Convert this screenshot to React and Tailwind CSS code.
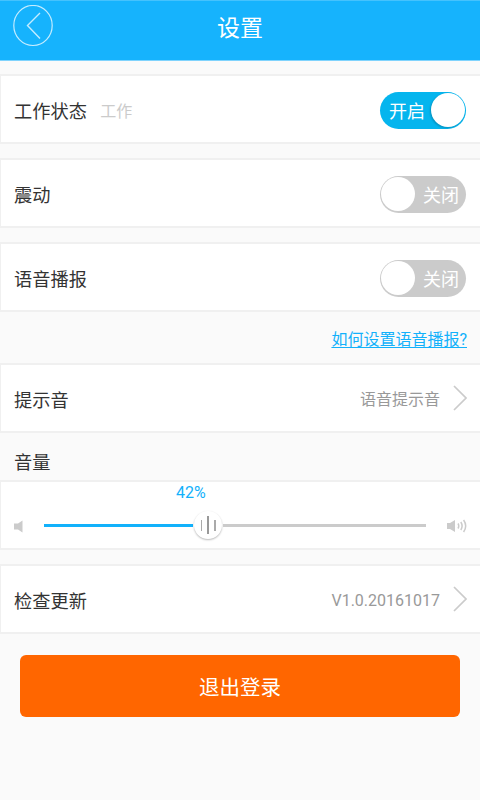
import React, { useState } from "react";

const Panel = ({ className = "", children }) => (
  <div
    className={`h-[70px] bg-white border-t-2 border-b-2 border-l border-[#f0f0f0] px-[13px] ${className}`}
  >
    {children}
  </div>
);

const Label = ({ children }) => (
  <span className="pt-[5px] tracking-[0.1px]">{children}</span>
);

const Switch = ({ on, onClick }) => (
  <button
    type="button"
    onClick={onClick}
    className={`flex items-center justify-between w-[86px] h-[37px] mt-[2px] mr-px rounded-full text-white text-[18px] leading-none p-[1px] ${
      on ? "bg-[#05b5ee] pl-[9px]" : "bg-[#cbcbcb] flex-row-reverse pr-[7px]"
    }`}
  >
    <span className="pt-[3px]">{on ? "开启" : "关闭"}</span>
    <span
      className={`size-[34px] rounded-full bg-white ${
        on ? "shadow-[-1px_1px_2px_rgba(0,0,0,0.2)]" : ""
      }`}
    />
  </button>
);

const Arrow = () => (
  <svg width="14" height="26" viewBox="0 0 14 26" fill="none" className="ml-[13px]">
    <path d="M1 1 L13 13 L1 25" stroke="#cbcbcb" strokeWidth="1.7" />
  </svg>
);

const Volume = ({ percent }) => (
  <Panel className="flex flex-col">
    <div className="h-[20px] pl-[162px] pt-px text-[16px] leading-[20px] text-[#12b1fb]">
      {percent}%
    </div>
    <div className="flex items-center h-[46px]">
      <svg
        width="9"
        height="13"
        viewBox="0 0 9 13"
        fill="#cbcbcb"
        className="shrink-0 mt-[2px]"
      >
        <path d="M0 3.5h4L8.5 0.5V12.5L4 9.5H0z" />
      </svg>
      <div className="flex items-center shrink-0 ml-[21px] w-[382px]">
        <div className="h-[3px] w-[149px] bg-[#12b1fb]" />
        <div className="flex items-center justify-center gap-[5px] mx-[1px] size-[28px] rounded-full bg-white shadow-[0_1px_2px_rgba(0,0,0,0.28)]">
          <span className="w-[1.5px] h-[11px] bg-[#aaaaaa]" />
          <span className="w-[2px] h-[18px] bg-[#999999]" />
          <span className="w-[1.5px] h-[11px] bg-[#aaaaaa]" />
        </div>
        <div className="h-[3px] flex-1 bg-[#cbcbcb]" />
      </div>
      <svg
        width="21"
        height="14"
        viewBox="0 0 21 14"
        fill="none"
        stroke="#cbcbcb"
        strokeWidth="1.5"
        className="shrink-0 ml-[21px] mt-[2px]"
      >
        <path d="M0 4h3L8 1V13L3 10H0z" fill="#cbcbcb" stroke="none" />
        <path d="M11 4.5Q12.5 7 11 9.5M13.8 3Q16.4 7 13.8 11M16.6 1Q20.8 7 16.6 13" />
      </svg>
    </div>
  </Panel>
);

const App = () => {
  const [working, setWorking] = useState(true);
  const [vibrate, setVibrate] = useState(false);
  const [voice, setVoice] = useState(false);

  return (
    <div className="w-[480px] h-[800px] overflow-hidden bg-[#fafafa] text-[#333333] text-[18.2px] font-[Roboto,'Noto_Sans_CJK_SC',sans-serif]">
      <header className="grid grid-cols-[1fr_auto_1fr] items-start h-[61px] bg-[#16b3fd] border-t border-b border-t-[#45c2fd] border-b-[#7fd3fd] mb-[13px]">
        <button type="button" className="ml-[13px] mt-[4px] w-fit">
          <svg width="40" height="42" viewBox="0 0 40 42" fill="none" stroke="#c4ecff">
            <ellipse cx="20" cy="20.5" rx="19.2" ry="20" strokeWidth="1.2" />
            <path d="M27 8L14.5 20.5L27 33.5" strokeWidth="1.4" />
          </svg>
        </button>
        <h1 className="text-white text-[23px] leading-[55px]">设置</h1>
      </header>

      <Panel className="flex items-center">
        <Label>工作状态</Label>
        <span className="ml-[13px] mr-auto pt-[6px] text-[16px] text-[#cbcbcb]">工作</span>
        <Switch on={working} onClick={() => setWorking(!working)} />
      </Panel>
      <Panel className="flex items-center justify-between mt-[14px]">
        <Label>震动</Label>
        <Switch on={vibrate} onClick={() => setVibrate(!vibrate)} />
      </Panel>
      <Panel className="flex items-center justify-between mt-[14px]">
        <Label>语音播报</Label>
        <Switch on={voice} onClick={() => setVoice(!voice)} />
      </Panel>

      <div className="flex items-center justify-end h-[51px] pt-[4px] pr-[13px]">
        <a href="#" className="text-[16px] text-[#12b1fb] underline underline-offset-[2px]">
          如何设置语音播报?
        </a>
      </div>

      <Panel className="flex items-center">
        <Label>提示音</Label>
        <span className="ml-auto pt-[4px] text-[16px] text-[#999999]">语音提示音</span>
        <Arrow />
      </Panel>

      <div className="flex items-center h-[47px] pl-[14px] pt-[12px]">音量</div>
      <Volume percent={42} />

      <Panel className="flex items-center mt-[14px]">
        <Label>检查更新</Label>
        <span className="ml-auto pt-[4px] text-[16px] text-[#999999]">V1.0.20161017</span>
        <Arrow />
      </Panel>

      <button
        type="button"
        className="block mx-[20px] mt-[21px] w-[440px] h-[62px] pt-[4px] rounded-[6px] bg-[#ff6600] text-white text-[20.5px]"
      >
        退出登录
      </button>
    </div>
  );
};

export default App;
